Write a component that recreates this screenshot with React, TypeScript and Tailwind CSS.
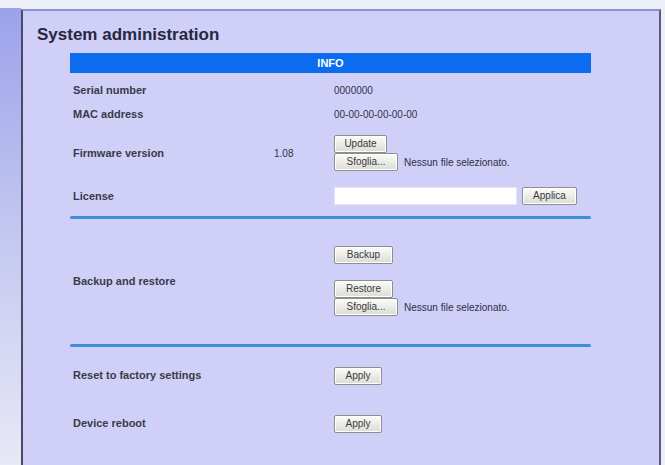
import React from 'react';

const font = { fontFamily: '"Liberation Sans", Arial, sans-serif' };

function Btn({ children, w }: { children: React.ReactNode; w: string }) {
  return (
    <button
      className={`${w} block h-[18px] rounded-[2px] border border-[#8e8e8e] bg-gradient-to-b from-[#fbfbf8] to-[#dcdcd6] text-[10px] leading-none text-[#3a3a3a] shadow-[inset_0_0_0_1px_#ffffff]`}
    >
      {children}
    </button>
  );
}

function FilePicker() {
  return (
    <div className="flex items-center gap-[6px]">
      <Btn w="w-[64px]">Sfoglia...</Btn>
      <span className="text-[10px] text-[#2e2e48]">Nessun file selezionato.</span>
    </div>
  );
}

function Label({ children }: { children: React.ReactNode }) {
  return <div className="w-[204px] shrink-0 pl-[3px] text-[11px] font-bold text-[#3a3a48]">{children}</div>;
}

function Divider() {
  return <div className="h-[3px] w-full rounded-full bg-[#3b90da]" />;
}

export default function App() {
  return (
    <div className="flex h-[465px] w-[665px] overflow-hidden bg-[#eceef8]" style={font}>
      {/* left gutter */}
      <div className="mt-[8px] w-[21px] shrink-0 bg-gradient-to-b from-[#9ca2ea] via-[#c4c8f0] to-[#e8e8f6]" />

      <div className="mt-[9px] mr-[4px] flex-1 border-l-2 border-r-2 border-t-2 border-l-[#4a4a66] border-r-[#5a5a78] border-t-[#8c92d8] bg-[#cfcff8]">
        <h1 className="pl-[14px] pt-[14px] text-[17px] font-bold leading-[20px] text-[#272740]">System administration</h1>

        <div className="ml-[47px] mt-[8px] w-[521px]">
          <div className="flex h-[20px] items-center justify-center bg-[#0b6cf0] text-[11px] font-bold text-white">INFO</div>

          <div className="mt-[5px] flex h-[24px] items-center">
            <Label>Serial number</Label>
            <div className="w-[60px] shrink-0" />
            <span className="text-[10px] text-[#33334a]">0000000</span>
          </div>
          <div className="flex h-[24px] items-center">
            <Label>MAC address</Label>
            <div className="w-[60px] shrink-0" />
            <span className="text-[10px] text-[#33334a]">00-00-00-00-00-00</span>
          </div>

          <div className="mt-[9px] flex items-center">
            <Label>Firmware version</Label>
            <div className="w-[60px] shrink-0 text-[10px] text-[#33334a]">1.08</div>
            <div className="flex flex-col">
              <Btn w="w-[53px]">Update</Btn>
              <FilePicker />
            </div>
          </div>

          <div className="mt-[16px] flex h-[18px] items-center">
            <Label>License</Label>
            <div className="w-[60px] shrink-0" />
            <input className="h-[18px] w-[183px] border border-[#e4e4ee] bg-white outline-none" />
            <div className="ml-[5px]">
              <Btn w="w-[55px]">Applica</Btn>
            </div>
          </div>

          <div className="mt-[11px]">
            <Divider />
          </div>

          <div className="mt-[27px] flex items-center">
            <Label>Backup and restore</Label>
            <div className="w-[60px] shrink-0" />
            <div className="flex flex-col">
              <Btn w="w-[59px]">Backup</Btn>
              <div className="mt-[16px]">
                <Btn w="w-[59px]">Restore</Btn>
              </div>
              <FilePicker />
            </div>
          </div>

          <div className="mt-[28px]">
            <Divider />
          </div>

          <div className="mt-[19px] flex h-[19px] items-center">
            <Label>Reset to factory settings</Label>
            <div className="w-[60px] shrink-0" />
            <Btn w="w-[48px]">Apply</Btn>
          </div>

          <div className="mt-[29px] flex h-[19px] items-center">
            <Label>Device reboot</Label>
            <div className="w-[60px] shrink-0" />
            <Btn w="w-[48px]">Apply</Btn>
          </div>
        </div>
      </div>
    </div>
  );
}
